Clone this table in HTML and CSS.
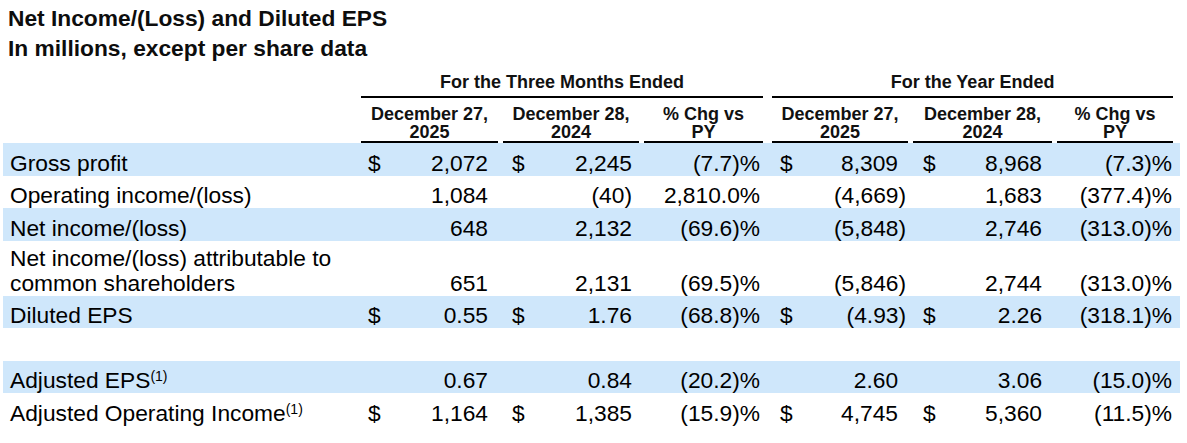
FILE: index.html
```html
<!DOCTYPE html>
<html lang="en">
<head>
<meta charset="utf-8">
<title>Net Income/(Loss) and Diluted EPS</title>
<link rel="stylesheet" href="styles.css">
</head>
<body>
<h1 class="title">Net Income/(Loss) and Diluted EPS<br>In millions, except per share data</h1>
<table class="fin">
  <colgroup>
    <col class="w-label"><col class="w-q1"><col class="w-q2"><col class="w-qp"><col class="w-y1"><col class="w-y2"><col class="w-yp">
  </colgroup>
  <thead>
    <tr>
      <th></th>
      <th colspan="3" class="grp-q"><div class="grp">For the Three Months Ended</div></th>
      <th colspan="3" class="grp-y"><div class="grp">For the Year Ended</div></th>
    </tr>
    <tr>
      <th></th>
      <th class="col-q1"><div class="ch">December 27,<br>2025</div></th>
      <th class="col-q2"><div class="ch">December 28,<br>2024</div></th>
      <th class="col-qp"><div class="ch">% Chg vs<br>PY</div></th>
      <th class="col-y1"><div class="ch">December 27,<br>2025</div></th>
      <th class="col-y2"><div class="ch">December 28,<br>2024</div></th>
      <th class="col-yp"><div class="ch">% Chg vs<br>PY</div></th>
    </tr>
  </thead>
  <tbody>
    <tr class="band">
      <td class="label">Gross profit</td>
      <td class="col-q1"><div class="amt"><span class="cur">$</span><span class="v">2,072</span></div></td>
      <td class="col-q2"><div class="amt"><span class="cur">$</span><span class="v">2,245</span></div></td>
      <td class="col-qp"><div class="amt"><span class="v">(7.7)%</span></div></td>
      <td class="col-y1"><div class="amt"><span class="cur">$</span><span class="v">8,309</span></div></td>
      <td class="col-y2"><div class="amt"><span class="cur">$</span><span class="v">8,968</span></div></td>
      <td class="col-yp"><div class="amt"><span class="v">(7.3)%</span></div></td>
    </tr>
    <tr>
      <td class="label">Operating income/(loss)</td>
      <td class="col-q1"><div class="amt"><span class="v">1,084</span></div></td>
      <td class="col-q2"><div class="amt"><span class="v">(40)</span></div></td>
      <td class="col-qp"><div class="amt"><span class="v">2,810.0%</span></div></td>
      <td class="col-y1"><div class="amt"><span class="v neg">(4,669)</span></div></td>
      <td class="col-y2"><div class="amt"><span class="v">1,683</span></div></td>
      <td class="col-yp"><div class="amt"><span class="v">(377.4)%</span></div></td>
    </tr>
    <tr class="band">
      <td class="label">Net income/(loss)</td>
      <td class="col-q1"><div class="amt"><span class="v">648</span></div></td>
      <td class="col-q2"><div class="amt"><span class="v">2,132</span></div></td>
      <td class="col-qp"><div class="amt"><span class="v">(69.6)%</span></div></td>
      <td class="col-y1"><div class="amt"><span class="v neg">(5,848)</span></div></td>
      <td class="col-y2"><div class="amt"><span class="v">2,746</span></div></td>
      <td class="col-yp"><div class="amt"><span class="v">(313.0)%</span></div></td>
    </tr>
    <tr class="tall">
      <td class="label">Net income/(loss) attributable to<br>common shareholders</td>
      <td class="col-q1"><div class="amt"><span class="v">651</span></div></td>
      <td class="col-q2"><div class="amt"><span class="v">2,131</span></div></td>
      <td class="col-qp"><div class="amt"><span class="v">(69.5)%</span></div></td>
      <td class="col-y1"><div class="amt"><span class="v neg">(5,846)</span></div></td>
      <td class="col-y2"><div class="amt"><span class="v">2,744</span></div></td>
      <td class="col-yp"><div class="amt"><span class="v">(313.0)%</span></div></td>
    </tr>
    <tr class="band">
      <td class="label">Diluted EPS</td>
      <td class="col-q1"><div class="amt"><span class="cur">$</span><span class="v">0.55</span></div></td>
      <td class="col-q2"><div class="amt"><span class="cur">$</span><span class="v">1.76</span></div></td>
      <td class="col-qp"><div class="amt"><span class="v">(68.8)%</span></div></td>
      <td class="col-y1"><div class="amt"><span class="cur">$</span><span class="v neg">(4.93)</span></div></td>
      <td class="col-y2"><div class="amt"><span class="cur">$</span><span class="v">2.26</span></div></td>
      <td class="col-yp"><div class="amt"><span class="v">(318.1)%</span></div></td>
    </tr>
    <tr class="blank">
      <td class="label"></td><td></td><td></td><td></td><td></td><td></td><td></td>
    </tr>
    <tr class="band">
      <td class="label">Adjusted EPS<sup class="note">(1)</sup></td>
      <td class="col-q1"><div class="amt"><span class="v">0.67</span></div></td>
      <td class="col-q2"><div class="amt"><span class="v">0.84</span></div></td>
      <td class="col-qp"><div class="amt"><span class="v">(20.2)%</span></div></td>
      <td class="col-y1"><div class="amt"><span class="v">2.60</span></div></td>
      <td class="col-y2"><div class="amt"><span class="v">3.06</span></div></td>
      <td class="col-yp"><div class="amt"><span class="v">(15.0)%</span></div></td>
    </tr>
    <tr>
      <td class="label">Adjusted Operating Income<sup class="note">(1)</sup></td>
      <td class="col-q1"><div class="amt"><span class="cur">$</span><span class="v">1,164</span></div></td>
      <td class="col-q2"><div class="amt"><span class="cur">$</span><span class="v">1,385</span></div></td>
      <td class="col-qp"><div class="amt"><span class="v">(15.9)%</span></div></td>
      <td class="col-y1"><div class="amt"><span class="cur">$</span><span class="v">4,745</span></div></td>
      <td class="col-y2"><div class="amt"><span class="cur">$</span><span class="v">5,360</span></div></td>
      <td class="col-yp"><div class="amt"><span class="v">(11.5)%</span></div></td>
    </tr>
  </tbody>
</table>
</body>
</html>
```

FILE: styles.css
```css
* {
  box-sizing: border-box;
}

html,
body {
  margin: 0;
  padding: 0;
  background: #ffffff;
}

body {
  font-family: "Liberation Sans", Arial, sans-serif;
  color: #000000;
  width: 1187px;
}

.title {
  margin: 0;
  padding: 3px 0 0 8px;
  font-size: 22.75px;
  font-weight: bold;
  line-height: 30px;
  color: #0d0d0d;
}

.fin {
  margin: 10px 0 0 3px;
  border-collapse: separate;
  border-spacing: 0;
  table-layout: fixed;
  width: 1177px;
}

.w-label { width: 356px; }
.w-q1 { width: 142px; }
.w-q2 { width: 141px; }
.w-qp { width: 125px; }
.w-y1 { width: 143px; }
.w-y2 { width: 145px; }
.w-yp { width: 125px; }

.fin th,
.fin td {
  padding: 0;
  vertical-align: bottom;
}

/* header */
.grp,
.ch {
  font-size: 18px;
  font-weight: bold;
  line-height: 18px;
  text-align: center;
  border-bottom: 2px solid #000000;
  color: #111111;
}

.grp {
  padding-bottom: 5px;
}

.ch {
  padding: 7px 0 0;
}

.fin th.grp-q { padding: 0 4px 0 2px; }
.fin th.grp-y { padding: 0 7px 0 5px; }

.fin th.col-q1 { padding: 0 3px 0 2px; }
.fin th.col-q2 { padding: 0 3px 0 2px; }
.fin th.col-qp { padding: 0 4px 0 2px; }
.fin th.col-y1 { padding: 0 2px 0 5px; }
.fin th.col-y2 { padding: 0 3px 0 3px; }
.fin th.col-yp { padding: 0 7px 0 2px; }

/* body */
.fin tbody td {
  height: 32.5px;
  font-size: 22.75px;
  line-height: 25px;
}

.fin tbody tr.tall td {
  height: 55px;
}

.band td {
  background: #cfe7fb;
}

.fin td.label {
  padding-left: 7px;
  white-space: nowrap;
}

.amt {
  display: flex;
  align-items: flex-end;
  white-space: nowrap;
}

.amt .v {
  margin-left: auto;
}

.v.neg {
  margin-right: -8px;
}

.fin td.col-q1 { padding: 0 13px 0 9px; }
.fin td.col-q2 { padding: 0 10px 0 11px; }
.fin td.col-qp { padding: 0 7px 0 0; }
.fin td.col-y1 { padding: 0 12px 0 13px; }
.fin td.col-y2 { padding: 0 13px 0 13px; }
.fin td.col-yp { padding: 0 8px 0 0; }

.note {
  font-size: 14px;
  line-height: 0;
  vertical-align: 7px;
}
```
